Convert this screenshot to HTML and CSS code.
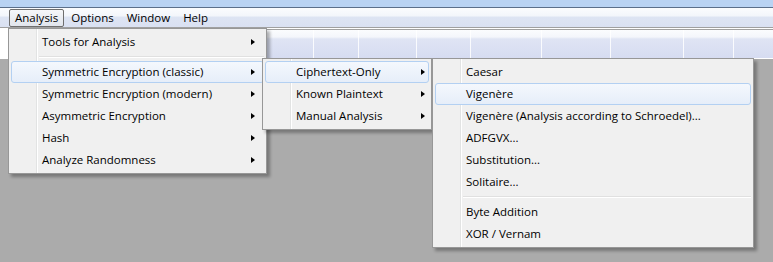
FILE: index.html
```html
<!DOCTYPE html>
<html>
<head>
    <meta charset="UTF-8">
    <title>Analysis menu</title>
    <link rel="stylesheet" href="styles.css">
</head>
<body>

<div class="titlebar"></div>

<!-- menu bar -->
<div class="menubar">
    <span class="mb_item active">Analysis</span>
    <span class="mb_item">Options</span>
    <span class="mb_item">Window</span>
    <span class="mb_item">Help</span>
</div>

<!-- toolbar, buttons are empty -->
<div class="toolrow">
    <div class="toolbar">
        <span></span><span></span><span></span><span></span><span></span>
        <span></span><span></span><span></span><span></span>
    </div>
</div>

<div class="workspace"></div>

<!-- open menus -->
<div class="menu m1">
    <div class="item">Tools for Analysis<i class="arrow"></i></div>
    <div class="sep"></div>
    <div class="item hot">Symmetric Encryption (classic)<i class="arrow"></i></div>
    <div class="item">Symmetric Encryption (modern)<i class="arrow"></i></div>
    <div class="item">Asymmetric Encryption<i class="arrow"></i></div>
    <div class="item">Hash<i class="arrow"></i></div>
    <div class="item">Analyze Randomness<i class="arrow"></i></div>
</div>

<div class="menu m2">
    <div class="item hot">Ciphertext-Only<i class="arrow"></i></div>
    <div class="item">Known Plaintext<i class="arrow"></i></div>
    <div class="item">Manual Analysis<i class="arrow"></i></div>
</div>

<div class="menu m3">
    <div class="item">Caesar</div>
    <div class="item hot">Vigenère</div>
    <div class="item">Vigenère (Analysis according to Schroedel)...</div>
    <div class="item">ADFGVX...</div>
    <div class="item">Substitution...</div>
    <div class="item">Solitaire...</div>
    <div class="sep"></div>
    <div class="item">Byte Addition</div>
    <div class="item">XOR / Vernam</div>
</div>

</body>
</html>
```

FILE: styles.css
```css
body{
    margin: 0;
    width: 773px;
    height: 262px;
    overflow: hidden;
    background: #ababab;
    font-family: "Open Sans", "Noto Sans", sans-serif;
    font-size: 11.5px;
    color: #000;
    position: relative;
}
.titlebar{
    height: 7px;
    background: #b9d3f3;
    border-bottom: 1px solid #5b6f8a;
}
.menubar{
    height: 19px;
    padding-left: 9px;
    display: flex;
    align-items: flex-end;
    background: linear-gradient(#fbfcfe, #f3f6fb 40%, #dde4f3 50%, #dae1f2);
    border-bottom: 1px solid #a0a0a0;
}
.mb_item{
    height: 16px;
    line-height: 15px;
    padding: 0 5px;
    margin-right: 1px;
    border: 1px solid transparent;
    border-radius: 2px;
}
.mb_item.active{
    border-color: #6e6e6e;
    background: linear-gradient(#f6f7f9, #e1e5ec);
}
.toolrow{
    height: 30px;
    padding-top: 1px;
    background: #fff;
}
.toolbar{
    margin-left: 266px;
    height: 29px;
    border-top: 1px solid #a0a0a0;
    border-left: 1px solid #a0a0a0;
    box-sizing: border-box;
    display: grid;
    grid-template-columns: 47px 45px 58px 54px 71px 69px 73px 50px 1fr;
    background: linear-gradient(#fbfcfe, #f4f6fb 25%, #dfe4f4 32%, #d6dcf1);
}
.toolbar span{
    border-right: 1px solid rgba(255,255,255,0.85);
}
.toolbar span:last-child{ border-right: none; }

.menu{
    position: absolute;
    box-sizing: border-box;
    padding: 2px;
    border: 1px solid #979797;
    background: linear-gradient(to right, transparent 27px, #e2e3e3 27px, #e2e3e3 28px, #fff 28px, #fff 29px, transparent 29px), #f0f0f0;
    box-shadow: 3px 3px 3px rgba(0,0,0,0.3);
}
.m1{ left: 8px; top: 28px; width: 259px; }
.m2{ left: 262px; top: 58px; width: 170px; }
.m3{ left: 432px; top: 58px; width: 322px; }

.item{
    height: 22px;
    line-height: 20px;
    box-sizing: border-box;
    padding-left: 30px;
    border: 1px solid transparent;
    border-radius: 3px;
    display: flex;
    align-items: center;
    justify-content: space-between;
    white-space: nowrap;
}
.item.hot{
    border-color: #b3d0f2;
    background: linear-gradient(#f4f8fd, #e6eef9);
}
.arrow{
    width: 0;
    height: 0;
    border-left: 4px solid #000;
    border-top: 3.5px solid transparent;
    border-bottom: 3.5px solid transparent;
}
.m1 .arrow{ margin-right: 8px; }
.m2 .arrow{ margin-right: 3px; }

.sep{
    height: 8px;
    margin-left: 28px;
    background: linear-gradient(transparent 3px, #e0e0e0 3px, #e0e0e0 4px, #fff 4px, #fff 5px, transparent 5px);
}
```
